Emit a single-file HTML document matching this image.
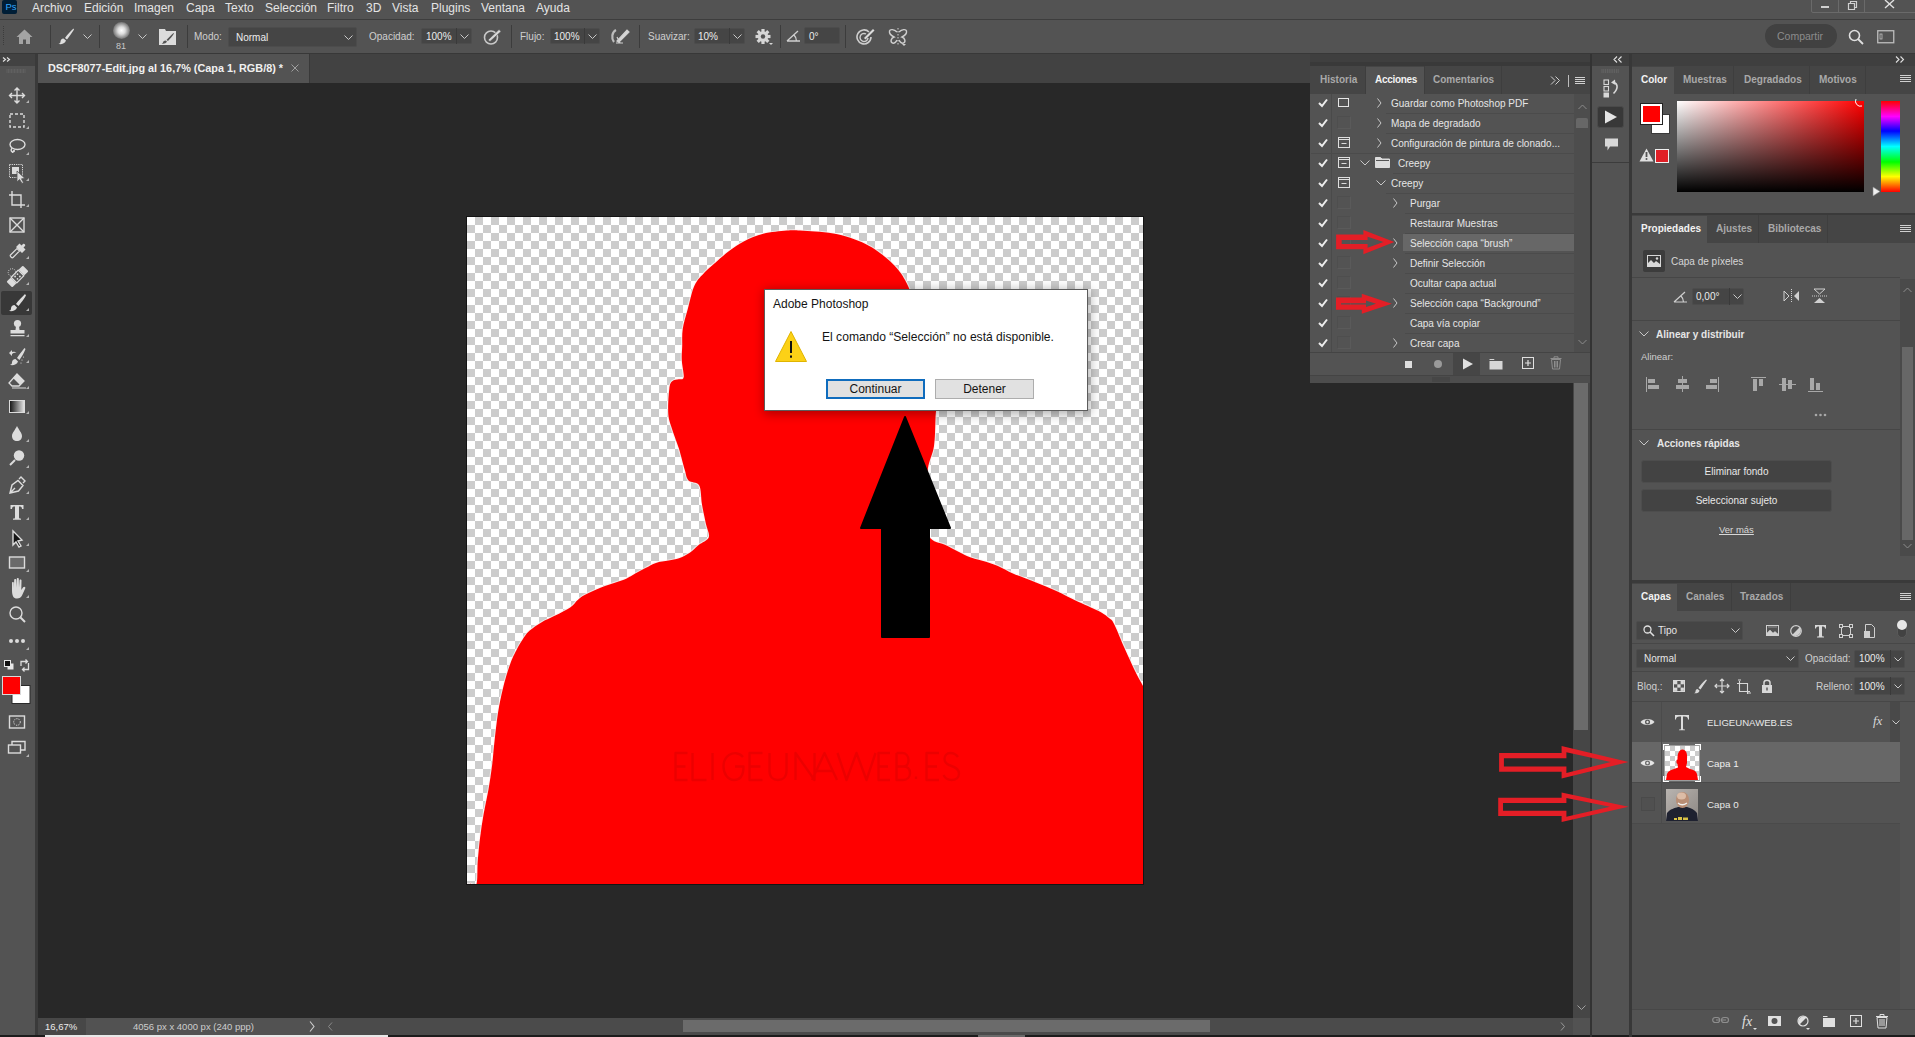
<!DOCTYPE html>
<html><head><meta charset="utf-8">
<style>
*{margin:0;padding:0;box-sizing:border-box}
html,body{width:1915px;height:1037px;overflow:hidden;background:#282828;font-family:"Liberation Sans",sans-serif;color:#d8d8d8;font-size:11px}
.a{position:absolute}
.t{position:absolute;white-space:nowrap;line-height:1}
</style></head><body>
<!-- menu bar -->
<div class="a" style="left:0;top:0;width:1915px;height:19px;background:#535353"></div>
<div class="a" style="left:0;top:19px;width:1915px;height:1px;background:#3d3d3d"></div>
<!-- options bar -->
<div class="a" style="left:0;top:20px;width:1915px;height:33px;background:#535353"></div>
<div class="a" style="left:0;top:53px;width:1915px;height:1px;background:#383838"></div>
<!-- menu content -->
<div class="a" style="left:2px;top:0;width:15px;height:14px;background:#001e36;border-radius:2px"></div>
<div class="t" style="left:5.5px;top:1.5px;font-size:9.5px;color:#31a8ff">Ps</div>
<div id="menu" style="font-size:12px;color:#e4e4e4">
<div class="t" style="left:32px;top:1.5px">Archivo</div>
<div class="t" style="left:84px;top:1.5px">Edición</div>
<div class="t" style="left:134px;top:1.5px">Imagen</div>
<div class="t" style="left:186px;top:1.5px">Capa</div>
<div class="t" style="left:225px;top:1.5px">Texto</div>
<div class="t" style="left:265px;top:1.5px">Selección</div>
<div class="t" style="left:327px;top:1.5px">Filtro</div>
<div class="t" style="left:366px;top:1.5px">3D</div>
<div class="t" style="left:392px;top:1.5px">Vista</div>
<div class="t" style="left:431px;top:1.5px">Plugins</div>
<div class="t" style="left:481px;top:1.5px">Ventana</div>
<div class="t" style="left:536px;top:1.5px">Ayuda</div>
</div>
<!-- window controls -->
<div class="a" style="left:1811px;top:-1px;width:105px;height:14px;border:1px solid #6a6a6a;border-radius:0 0 0 2px"></div>
<div class="a" style="left:1838px;top:0;width:1px;height:13px;background:#6a6a6a"></div>
<div class="a" style="left:1864px;top:0;width:1px;height:13px;background:#6a6a6a"></div>
<div class="a" style="left:1821px;top:6px;width:8px;height:2px;background:#d0d0d0"></div>
<svg class="a" style="left:1846px;top:0" width="12" height="10"><path d="M2.5,3.5h6v6h-6z M4.5,3.5v-2h6v6h-2" fill="none" stroke="#d0d0d0" stroke-width="1.2"/></svg>
<svg class="a" style="left:1884px;top:0" width="12" height="10"><path d="M1,0 L10,8 M10,0 L1,8" stroke="#e0e0e0" stroke-width="1.4"/></svg>
<!-- options bar content -->
<div class="a" style="left:3px;top:26px;width:1px;height:19px;border-left:1px dotted #3c3c3c"></div>
<svg class="a" style="left:16px;top:29px" width="17" height="16"><path d="M8.5,0.5 L0.5,8 L3,8 L3,15 L7,15 L7,10.5 L10,10.5 L10,15 L14,15 L14,8 L16.5,8 Z" fill="#a4a4a4"/></svg>
<div class="a" style="left:50px;top:25px;width:1px;height:23px;background:#3c3c3c"></div>
<svg class="a" style="left:58px;top:28px" width="17" height="17"><path d="M15.5,0.5 C13,3 9,7 7,10 L9,11.5 C11,9 14.5,4 16,1.5 Z M5.5,10.5 C3.5,10.5 2.5,12 2.5,13.5 C2.5,15 1.5,15.5 0.5,16 C3,16.5 7,16 8,12.5 Z" fill="#dedede"/></svg>
<svg class="a" style="left:83px;top:34px" width="9" height="6"><path d="M0.5,0.5 L4.5,4.5 L8.5,0.5" fill="none" stroke="#c8c8c8" stroke-width="1"/></svg>
<div class="a" style="left:99px;top:25px;width:1px;height:23px;background:#3c3c3c"></div>
<div class="a" style="left:113px;top:22px;width:17px;height:17px;border-radius:50%;background:radial-gradient(circle,#fff 0%,#ddd 30%,rgba(150,150,150,.5) 70%,rgba(83,83,83,0) 100%)"></div>
<div class="t" style="left:116px;top:42px;font-size:9px;color:#c8c8c8">81</div>
<svg class="a" style="left:138px;top:34px" width="9" height="6"><path d="M0.5,0.5 L4.5,4.5 L8.5,0.5" fill="none" stroke="#c8c8c8" stroke-width="1"/></svg>
<svg class="a" style="left:158px;top:27px" width="19" height="19"><path d="M1,2 L7,2 L8,4 L18,4 L18,18 L1,18 Z" fill="#dcdcdc"/><path d="M15.5,6 C13,8.5 10,11 8.5,13 L10,14 C12,12 14.5,9 16,6.5 Z M7.5,13.5 C6,13.5 5,14.5 5,15.5 C5,16 4,16.5 3.5,16.5 C5.5,17 8,16.5 9,14.5 Z" fill="#535353"/></svg>
<div class="a" style="left:187px;top:25px;width:1px;height:23px;background:#3c3c3c"></div>
<div style="font-size:10px;color:#cfcfcf">
<div class="t" style="left:194px;top:32px">Modo:</div>
<div class="a" style="left:228px;top:27px;width:129px;height:20px;background:#454545;border:1px solid #4c4c4c;border-radius:2px"></div>
<div class="t" style="left:236px;top:33px;color:#ececec">Normal</div>
<svg class="a" style="left:344px;top:35px" width="9" height="6"><path d="M0.5,0.5 L4.5,4.5 L8.5,0.5" fill="none" stroke="#c8c8c8" stroke-width="1"/></svg>
<div class="t" style="left:369px;top:32px">Opacidad:</div>
<div class="a" style="left:421px;top:28px;width:51px;height:16px;background:#454545;border:1px solid #4c4c4c;border-radius:2px"></div>
<div class="a" style="left:456px;top:28px;width:1px;height:16px;background:#3a3a3a"></div>
<div class="t" style="left:426px;top:32px;color:#ececec">100%</div>
<svg class="a" style="left:460px;top:34px" width="9" height="6"><path d="M0.5,0.5 L4.5,4.5 L8.5,0.5" fill="none" stroke="#c8c8c8" stroke-width="1"/></svg>
<svg class="a" style="left:483px;top:28px" width="19" height="17"><circle cx="8" cy="9.5" r="6.5" fill="none" stroke="#c8c8c8" stroke-width="1.6"/><path d="M5,12 L16,1.5 L18,3.5 L7,13.5 Z" fill="#d8d8d8" stroke="#535353" stroke-width="0.6"/></svg>
<div class="a" style="left:511px;top:25px;width:1px;height:23px;background:#3c3c3c"></div>
<div class="t" style="left:520px;top:32px">Flujo:</div>
<div class="a" style="left:550px;top:28px;width:50px;height:16px;background:#454545;border:1px solid #4c4c4c;border-radius:2px"></div>
<div class="a" style="left:584px;top:28px;width:1px;height:16px;background:#3a3a3a"></div>
<div class="t" style="left:554px;top:32px;color:#ececec">100%</div>
<svg class="a" style="left:588px;top:34px" width="9" height="6"><path d="M0.5,0.5 L4.5,4.5 L8.5,0.5" fill="none" stroke="#c8c8c8" stroke-width="1"/></svg>
<svg class="a" style="left:610px;top:28px" width="20" height="17"><path d="M6,2 C2,4 1,10 4,14" fill="none" stroke="#bdbdbd" stroke-width="2.2"/><path d="M7,13 L17,2 L19,4 L9,14 Z M7,9 L10,15 M6,15 L13,15" fill="#d8d8d8" stroke="#d0d0d0" stroke-width="1.2"/></svg>
<div class="a" style="left:639px;top:25px;width:1px;height:23px;background:#3c3c3c"></div>
<div class="t" style="left:648px;top:32px">Suavizar:</div>
<div class="a" style="left:694px;top:28px;width:51px;height:16px;background:#454545;border:1px solid #4c4c4c;border-radius:2px"></div>
<div class="a" style="left:729px;top:28px;width:1px;height:16px;background:#3a3a3a"></div>
<div class="t" style="left:698px;top:32px;color:#ececec">10%</div>
<svg class="a" style="left:733px;top:34px" width="9" height="6"><path d="M0.5,0.5 L4.5,4.5 L8.5,0.5" fill="none" stroke="#c8c8c8" stroke-width="1"/></svg>
<svg class="a" style="left:755px;top:28px" width="18" height="18"><g transform="translate(8,8.5)"><circle r="5.2" fill="#d6d6d6"/><g fill="#d6d6d6"><rect x="-1.6" y="-7.5" width="3.2" height="15"/><rect x="-1.6" y="-7.5" width="3.2" height="15" transform="rotate(45)"/><rect x="-1.6" y="-7.5" width="3.2" height="15" transform="rotate(90)"/><rect x="-1.6" y="-7.5" width="3.2" height="15" transform="rotate(135)"/></g><circle r="2.2" fill="#535353"/></g><path d="M14,15 L18,15 L16,17 Z" fill="#d6d6d6"/></svg>
<div class="a" style="left:780px;top:25px;width:1px;height:23px;background:#3c3c3c"></div>
<svg class="a" style="left:786px;top:29px" width="15" height="13"><path d="M1,12 L14,12 M1,12 L12,2 M8,6 C10,8 10.5,10 10.5,12" fill="none" stroke="#cfcfcf" stroke-width="1.3"/></svg>
<div class="a" style="left:804px;top:27px;width:36px;height:17px;background:#454545;border:1px solid #4c4c4c;border-radius:2px"></div>
<div class="t" style="left:809px;top:32px;color:#ececec">0°</div>
<div class="a" style="left:845px;top:25px;width:1px;height:23px;background:#3c3c3c"></div>
<svg class="a" style="left:856px;top:28px" width="19" height="17"><path d="M13,4 A7,7 0 1 0 15,9" fill="none" stroke="#cfcfcf" stroke-width="1.6"/><path d="M10,6 A4,4 0 1 0 12,10" fill="none" stroke="#cfcfcf" stroke-width="1.4"/><path d="M8,10 L17,1 L18.5,2.5 L9.5,11.5 Z" fill="#dcdcdc"/></svg>
<svg class="a" style="left:888px;top:28px" width="20" height="19"><path d="M9,4 C6,1 2,1 1.5,3 C1,6 4,8 6,9 C3,10 2,14 4.5,15 C6,16 8,14 9,12 M11,4 C14,1 18,1 18.5,3 C19,6 16,8 14,9 C17,10 18,14 15.5,15 C14,16 12,14 11,12" fill="none" stroke="#cfcfcf" stroke-width="1.4"/><path d="M10,0 L10,18" stroke="#cfcfcf" stroke-width="1" stroke-dasharray="1.5 1.5"/><path d="M14,16 L18,16 L16,18 Z" fill="#cfcfcf"/></svg>
</div>
<div class="a" style="left:1765px;top:24px;width:72px;height:24px;background:#414141;border-radius:12px"></div>
<div class="t" style="left:1777px;top:31px;font-size:10.5px;color:#8c8c8c">Compartir</div>
<svg class="a" style="left:1848px;top:29px" width="16" height="16"><circle cx="6.5" cy="6.5" r="5" fill="none" stroke="#e0e0e0" stroke-width="1.6"/><path d="M10,10 L15,15" stroke="#e0e0e0" stroke-width="1.8"/></svg>
<svg class="a" style="left:1877px;top:30px" width="18" height="14"><rect x="0.75" y="0.75" width="16" height="12" fill="none" stroke="#bdbdbd" stroke-width="1.3"/><rect x="3" y="4" width="2" height="5" fill="none" stroke="#bdbdbd" stroke-width="0.8"/></svg>
<!-- toolbar -->
<div class="a" style="left:0;top:54px;width:35px;height:983px;background:#535353"></div>
<div class="a" style="left:0;top:54px;width:35px;height:12px;background:#424242"></div>
<div class="a" style="left:35px;top:54px;width:3px;height:983px;background:#3a3a3a"></div>
<svg class="a" style="left:0;top:54px" width="35" height="710" viewBox="0 54 35 710">
<path d="M3,57.5 L5.5,59.5 L3,61.5 M7,57.5 L9.5,59.5 L7,61.5" fill="none" stroke="#e0e0e0" stroke-width="1.2"/>
<g stroke="#6a6a6a" stroke-width="0.6"><path d="M7,69v4M8.5,69v4M10,69v4M11.5,69v4M13,69v4M14.5,69v4M16,69v4M17.5,69v4M19,69v4M20.5,69v4M22,69v4M23.5,69v4M25,69v4"/></g>
<rect x="1" y="291" width="31" height="24" rx="2" fill="#383838"/>
<g fill="#b4b4b4">
<path d="M26,103 L29,103 L29,100 Z"/><path d="M26,129 L29,129 L29,126 Z"/><path d="M26,155 L29,155 L29,152 Z"/><path d="M26,181 L29,181 L29,178 Z"/><path d="M26,207 L29,207 L29,204 Z"/><path d="M26,259 L29,259 L29,256 Z"/><path d="M26,285 L29,285 L29,282 Z"/><path d="M26,311 L29,311 L29,308 Z"/><path d="M26,337 L29,337 L29,334 Z"/><path d="M26,363 L29,363 L29,360 Z"/><path d="M26,389 L29,389 L29,386 Z"/><path d="M26,414 L29,414 L29,411 Z"/><path d="M26,442 L29,442 L29,439 Z"/><path d="M26,468 L29,468 L29,465 Z"/><path d="M26,494 L29,494 L29,491 Z"/><path d="M26,520 L29,520 L29,517 Z"/><path d="M26,546 L29,546 L29,543 Z"/><path d="M26,572 L29,572 L29,569 Z"/><path d="M26,598 L29,598 L29,595 Z"/><path d="M26,650 L29,650 L29,647 Z"/><path d="M26,757 L29,757 L29,754 Z"/>
</g>
<g fill="none" stroke="#dcdcdc" stroke-width="1.4">
<!-- move -->
<path d="M17,88 V103 M9.5,95.5 H24.5 M14.5,90.5 L17,88 L19.5,90.5 M14.5,100.5 L17,103 L19.5,100.5 M12,93 L9.5,95.5 L12,98 M22,93 L24.5,95.5 L22,98"/>
<!-- marquee -->
<rect x="10" y="114" width="14" height="13" stroke-dasharray="3 2"/>
<!-- lasso -->
<ellipse cx="17.5" cy="144.5" rx="7.5" ry="5"/><path d="M12,148 C10,151 12,153 14,151.5 C15,150 13,150 12.5,153"/>
<!-- crop -->
<path d="M12,191 V205 H25 M9,195 H21 V208"/>
<!-- frame -->
<rect x="10" y="218" width="14" height="14"/><path d="M10,218 L24,232 M24,218 L10,232"/>
<!-- eyedropper -->
<path d="M10.5,255 L17,248.5 L19.5,251 L13,257.5 C12,258.5 9.5,256 10.5,255 Z" stroke-width="1.2"/>
<!-- healing -->
<circle cx="12" cy="272.5" r="3.8" stroke-dasharray="1 1.2" stroke-width="1"/>
<!-- quick mask -->
<rect x="9.5" y="716" width="15" height="12"/>
<circle cx="17" cy="722" r="3.3" stroke-dasharray="1.3 1.1" stroke-width="1"/>
<!-- screen mode -->
<rect x="8.5" y="745" width="12" height="8"/><path d="M12,745 V741.5 H25 V750 H20.5"/>
<!-- pen -->
<path d="M10,493 L12,485 L18,480.5 L23,485.5 L18.5,491 Z M10,493 L15,488 M19,479 L21,477 L25,481 L23,483"/>
<!-- path select -->
<path d="M13,531 L13,545 L16,542 L19,547 L21,546 L18,541 L22,540 Z" fill="#151515"/>
<!-- rect -->
<rect x="9.5" y="557" width="15" height="11" fill="#6a6a6a"/>
<!-- zoom -->
<circle cx="16" cy="613" r="6"/><path d="M20.5,617.5 L25,622" stroke-width="2"/>
<!-- swap -->
<path d="M21,666 V661.5 H27.5 M25.5,659.5 L27.5,661.5 L25.5,663.5 M28.5,663 V669.5 H22.5 M24.5,667.5 L22.5,669.5 L24.5,671.5" stroke-width="1.3"/>
</g>
<g fill="#dcdcdc">
<!-- object select -->
<rect x="9.5" y="164.5" width="13" height="13" fill="none" stroke="#dcdcdc" stroke-width="1" stroke-dasharray="1.2 1"/><rect x="12" y="167" width="7" height="7"/><path d="M17,171 L17,182 L19.5,179.5 L22,183.5 L23.5,182.5 L21.5,178.8 L25,178.5 Z" stroke="#535353" stroke-width="0.8"/>
<!-- healing dots -->
<circle cx="15" cy="276" r="0.9" fill="#535353"/><circle cx="17.5" cy="278.5" r="0.9" fill="#535353"/><circle cx="17.5" cy="273.5" r="0.9" fill="#535353"/><circle cx="20" cy="276" r="0.9" fill="#535353"/>
<!-- brush -->
<path d="M25,294 C22,297 18,301 16,304 L18.5,306 C21,303 24,299 26,295.5 Z M14.5,305 C12.5,305 11,306.5 11,308.5 C11,310 10,310.5 9,311 C12,311.5 16,311 17,307.5 Z"/>
<!-- stamp -->
<circle cx="17.5" cy="323.5" r="3.6"/><path d="M16,326 h3 l0.5,4 h5 v3.5 h-14 v-3.5 h5 z M10.5,335 h14 v1.3 h-14z"/>
<!-- history brush -->
<path d="M24.5,348 C22,351 19,355 17,358 L19.5,360 C21.5,357 24,353 25.5,349 Z M15.5,359 C13.5,359 12,360.5 12,362.5 C12,364 11,364.5 10,365 C13,365.5 17,365 18,361.5 Z"/><circle cx="22" cy="360" r="0.6"/><circle cx="23.5" cy="357" r="0.6"/><circle cx="21" cy="363" r="0.6"/><path d="M9,353 L12,350 L12,352 C14,351.5 15.5,352 16.5,353 C15,352.5 13.5,352.8 12,354 L12,356 Z"/>
<!-- eraser -->
<path d="M17,374 L24,381 L19,386 L12,386 L9,383 Z" fill="none" stroke="#dcdcdc" stroke-width="1.3"/><path d="M17,374 L24,381 L20,385 L13,378 Z"/><path d="M12,388 H26" stroke="#dcdcdc" stroke-width="1"/>
<!-- drop -->
<path d="M17,426 C15,430 12,433 12,436 C12,439 14,441 17,441 C20,441 22,439 22,436 C22,433 19,430 17,426 Z"/>
<!-- dodge -->
<circle cx="19" cy="455.5" r="5.2"/><path d="M15,460 L10,465" stroke="#dcdcdc" stroke-width="2"/>
<!-- T -->
<path d="M10.5,505 h13 v4 h-1.5 c0,-2 -1,-2.5 -3,-2.5 v11 c0,1 1,1 2,1.2 v1 h-8 v-1 c1,-0.2 2,-0.2 2,-1.2 v-11 c-2,0 -3,0.5 -3,2.5 h-1.5 z"/>
<!-- hand -->
<path d="M12,590 L12,583 C12,581.6 13.8,581.6 13.8,583 L13.8,588 L14.2,580 C14.2,578.6 16.2,578.6 16.2,580 L16.4,587.5 L16.8,579 C16.8,577.6 18.8,577.6 18.8,579 L19,587.5 L19.5,580.5 C19.5,579.1 21.5,579.1 21.5,580.5 L21.3,590 L23,587.5 C24,586 26,587 25.2,588.5 L22,595.5 C21,597.5 19.5,598.5 17,598.5 C13.5,598.5 12,596 12,590 Z"/>
<!-- dots -->
<circle cx="11" cy="641" r="2"/><circle cx="17" cy="641" r="2"/><circle cx="23" cy="641" r="2"/>
<!-- default colors -->
<rect x="7.5" y="663.5" width="6" height="6" fill="#e8e8e8"/><rect x="4.5" y="660.5" width="6" height="6" fill="#111" stroke="#e8e8e8" stroke-width="1"/>
<!-- gradient -->
</g>
<defs><linearGradient id="tg" x1="0" y1="0" x2="1" y2="0"><stop offset="0" stop-color="#111"/><stop offset="1" stop-color="#e8e8e8"/></linearGradient></defs>
<rect x="9.5" y="400.5" width="15" height="12" fill="url(#tg)" stroke="#dcdcdc" stroke-width="1"/>
<g transform="rotate(-45 17.5 276.5)" fill="#dcdcdc"><rect x="6" y="272.5" width="6" height="8" rx="1"/><rect x="23" y="272.5" width="6" height="8" rx="1"/><rect x="12.5" y="272.5" width="10" height="8" fill="none" stroke="#dcdcdc" stroke-width="1.2"/><circle cx="15.8" cy="274.8" r="0.9"/><circle cx="19.2" cy="274.8" r="0.9"/><circle cx="15.8" cy="278.2" r="0.9"/><circle cx="19.2" cy="278.2" r="0.9"/></g>
<path d="M16,247 L19.5,243.5 L21.5,245.5 L23,244 C24,243 26,245 25,246 L23.5,247.5 L25.5,249.5 L22,253 Z" fill="#dcdcdc"/>
<rect x="12" y="685.5" width="18" height="18" fill="#fff" stroke="#2a2a2a" stroke-width="1"/>
<rect x="2.5" y="676.5" width="18" height="18" fill="#ff0000" stroke="#d8d8d8" stroke-width="1"/>
</svg>
<!-- doc tab bar -->
<div class="a" style="left:38px;top:54px;width:1535px;height:29px;background:#424242"></div>
<div class="a" style="left:38px;top:54px;width:271px;height:29px;background:#535353"></div>
<div class="a" style="left:309px;top:54px;width:1px;height:29px;background:#393939"></div>
<!-- canvas area -->
<div class="a" style="left:38px;top:83px;width:1535px;height:935px;background:#282828"></div>
<!-- image canvas -->
<div class="a" style="left:466px;top:216px;width:678px;height:669px;background:#141414"></div>
<div id="img" class="a" style="left:467px;top:217px;width:676px;height:667px;background-color:#ccc;background-image:linear-gradient(45deg,#fff 25%,transparent 25%,transparent 75%,#fff 75%),linear-gradient(45deg,#fff 25%,transparent 25%,transparent 75%,#fff 75%);background-size:16px 16px;background-position:8px 0,0 8px"></div>
<svg class="a" style="left:0;top:0" width="1915" height="1037" viewBox="0 0 1915 1037">
<defs><clipPath id="cc"><rect x="467" y="217" width="676" height="667"/></clipPath></defs>
<g clip-path="url(#cc)">
<path fill="none" stroke="rgba(255,240,240,0.75)" stroke-width="2.2" d="M476.5,884.0 C477.8,880.3 477.1,869.4 477.7,861.7 C478.3,854.0 479.1,845.6 480.1,837.6 C481.1,829.6 482.3,821.5 483.7,813.5 C485.1,805.5 487.1,797.4 488.5,789.4 C489.9,781.4 491.1,773.3 492.1,765.3 C493.1,757.3 493.5,750.0 494.5,741.2 C495.5,732.4 496.7,721.1 498.1,712.3 C499.5,703.5 501.0,696.2 503.0,688.2 C505.0,680.2 507.9,670.4 510.2,664.0 C512.5,657.6 514.2,654.4 516.5,650.0 C518.8,645.6 521.7,640.8 523.9,637.6 C526.1,634.4 526.8,633.1 529.7,630.6 C532.6,628.1 537.0,625.0 541.3,622.5 C545.5,620.0 550.4,618.1 555.2,615.6 C560.0,613.1 566.4,610.2 570.2,607.5 C574.1,604.8 575.4,601.7 578.3,599.4 C581.2,597.1 583.1,595.8 587.6,593.6 C592.1,591.4 599.2,588.3 605.0,586.1 C610.8,583.9 617.9,582.0 622.3,580.3 C626.7,578.6 627.7,577.7 631.6,575.7 C635.5,573.7 641.5,570.2 645.5,568.1 C649.5,566.0 652.0,564.1 655.9,562.9 C659.8,561.6 664.8,561.4 668.6,560.6 C672.5,559.8 675.5,559.5 679.0,558.3 C682.5,557.0 686.1,555.3 689.4,553.1 C692.7,550.9 695.5,547.6 698.7,545.0 C701.9,542.4 707.6,540.8 708.8,537.3 C710.0,533.8 707.0,529.3 705.9,523.8 C704.8,518.3 703.1,510.9 702.0,504.5 C700.9,498.1 701.4,489.2 699.1,485.2 C696.9,481.2 690.9,483.0 688.5,480.4 C686.1,477.8 686.3,475.1 684.7,469.8 C683.1,464.5 681.0,455.3 678.9,448.6 C676.8,441.9 674.0,435.2 672.2,429.4 C670.4,423.6 668.8,420.8 668.3,414.0 C667.8,407.2 668.6,394.4 669.3,388.9 C669.9,383.4 670.6,382.8 672.2,381.2 C673.8,379.6 677.0,379.9 678.9,379.3 C680.8,378.7 683.2,380.5 683.7,377.3 C684.2,374.1 682.0,365.2 681.8,360.0 C681.5,354.8 682.1,351.1 682.2,346.0 C682.4,340.9 681.8,335.2 682.7,329.2 C683.6,323.2 685.5,317.4 687.5,310.1 C689.5,302.9 691.5,292.1 694.4,285.7 C697.3,279.3 701.5,275.9 705.0,272.0 C708.5,268.1 711.5,265.9 715.6,262.4 C719.7,258.9 724.6,254.3 729.4,250.8 C734.2,247.3 738.6,244.0 744.2,241.2 C749.9,238.4 756.2,235.6 763.3,233.8 C770.4,232.0 780.5,231.2 786.6,230.6 C792.7,230.0 795.2,230.3 800.0,230.5 C804.8,230.7 809.9,231.1 815.4,231.6 C820.9,232.1 827.4,232.5 833.2,233.5 C839.0,234.5 844.8,236.0 850.2,237.7 C855.6,239.4 861.1,241.7 865.6,243.9 C870.1,246.1 873.4,248.2 877.2,250.9 C881.1,253.6 884.9,256.5 888.7,260.1 C892.6,263.7 896.8,267.6 900.3,272.5 C903.8,277.4 906.0,281.5 909.6,289.4 C913.2,297.3 918.3,308.2 922.0,320.0 C925.7,331.8 929.7,346.7 932.0,360.0 C934.3,373.3 935.4,390.2 936.0,400.0 C936.6,409.8 935.8,410.8 935.5,418.5 C935.2,426.2 935.2,437.8 934.0,446.0 C932.8,454.2 929.5,459.0 928.0,468.0 C926.5,477.0 924.9,488.7 925.0,500.0 C925.1,511.3 924.7,527.9 928.5,535.6 C932.3,543.3 940.7,542.4 947.6,546.0 C954.5,549.6 963.7,554.7 970.1,557.3 C976.5,559.9 981.2,560.2 985.8,561.7 C990.4,563.2 993.3,564.0 997.9,566.0 C1002.5,568.0 1007.1,571.0 1013.5,573.8 C1019.9,576.5 1028.8,579.6 1036.0,582.5 C1043.2,585.4 1050.2,588.2 1056.9,591.2 C1063.6,594.2 1069.0,597.4 1076.0,600.7 C1083.0,604.0 1093.1,608.2 1098.6,611.1 C1104.1,614.0 1106.4,615.9 1109.0,618.1 C1111.6,620.3 1111.6,619.1 1114.2,624.2 C1116.8,629.3 1121.2,640.7 1124.7,648.5 C1128.2,656.3 1132.0,664.8 1135.0,671.0 C1138.0,677.2 1140.4,681.0 1142.9,685.8 C1145.4,690.6 1148.8,666.0 1150.0,700.0 C1151.2,734.0 1263.3,858.3 1150.0,890.0 C1036.7,921.7 583.3,891.0 470.0,890.0 C356.7,889.0 468.9,885.0 470.0,884.0 C471.1,883.0 475.2,887.7 476.5,884.0 Z"/>
<path fill="#ff0000" d="M476.5,884.0 C477.8,880.3 477.1,869.4 477.7,861.7 C478.3,854.0 479.1,845.6 480.1,837.6 C481.1,829.6 482.3,821.5 483.7,813.5 C485.1,805.5 487.1,797.4 488.5,789.4 C489.9,781.4 491.1,773.3 492.1,765.3 C493.1,757.3 493.5,750.0 494.5,741.2 C495.5,732.4 496.7,721.1 498.1,712.3 C499.5,703.5 501.0,696.2 503.0,688.2 C505.0,680.2 507.9,670.4 510.2,664.0 C512.5,657.6 514.2,654.4 516.5,650.0 C518.8,645.6 521.7,640.8 523.9,637.6 C526.1,634.4 526.8,633.1 529.7,630.6 C532.6,628.1 537.0,625.0 541.3,622.5 C545.5,620.0 550.4,618.1 555.2,615.6 C560.0,613.1 566.4,610.2 570.2,607.5 C574.1,604.8 575.4,601.7 578.3,599.4 C581.2,597.1 583.1,595.8 587.6,593.6 C592.1,591.4 599.2,588.3 605.0,586.1 C610.8,583.9 617.9,582.0 622.3,580.3 C626.7,578.6 627.7,577.7 631.6,575.7 C635.5,573.7 641.5,570.2 645.5,568.1 C649.5,566.0 652.0,564.1 655.9,562.9 C659.8,561.6 664.8,561.4 668.6,560.6 C672.5,559.8 675.5,559.5 679.0,558.3 C682.5,557.0 686.1,555.3 689.4,553.1 C692.7,550.9 695.5,547.6 698.7,545.0 C701.9,542.4 707.6,540.8 708.8,537.3 C710.0,533.8 707.0,529.3 705.9,523.8 C704.8,518.3 703.1,510.9 702.0,504.5 C700.9,498.1 701.4,489.2 699.1,485.2 C696.9,481.2 690.9,483.0 688.5,480.4 C686.1,477.8 686.3,475.1 684.7,469.8 C683.1,464.5 681.0,455.3 678.9,448.6 C676.8,441.9 674.0,435.2 672.2,429.4 C670.4,423.6 668.8,420.8 668.3,414.0 C667.8,407.2 668.6,394.4 669.3,388.9 C669.9,383.4 670.6,382.8 672.2,381.2 C673.8,379.6 677.0,379.9 678.9,379.3 C680.8,378.7 683.2,380.5 683.7,377.3 C684.2,374.1 682.0,365.2 681.8,360.0 C681.5,354.8 682.1,351.1 682.2,346.0 C682.4,340.9 681.8,335.2 682.7,329.2 C683.6,323.2 685.5,317.4 687.5,310.1 C689.5,302.9 691.5,292.1 694.4,285.7 C697.3,279.3 701.5,275.9 705.0,272.0 C708.5,268.1 711.5,265.9 715.6,262.4 C719.7,258.9 724.6,254.3 729.4,250.8 C734.2,247.3 738.6,244.0 744.2,241.2 C749.9,238.4 756.2,235.6 763.3,233.8 C770.4,232.0 780.5,231.2 786.6,230.6 C792.7,230.0 795.2,230.3 800.0,230.5 C804.8,230.7 809.9,231.1 815.4,231.6 C820.9,232.1 827.4,232.5 833.2,233.5 C839.0,234.5 844.8,236.0 850.2,237.7 C855.6,239.4 861.1,241.7 865.6,243.9 C870.1,246.1 873.4,248.2 877.2,250.9 C881.1,253.6 884.9,256.5 888.7,260.1 C892.6,263.7 896.8,267.6 900.3,272.5 C903.8,277.4 906.0,281.5 909.6,289.4 C913.2,297.3 918.3,308.2 922.0,320.0 C925.7,331.8 929.7,346.7 932.0,360.0 C934.3,373.3 935.4,390.2 936.0,400.0 C936.6,409.8 935.8,410.8 935.5,418.5 C935.2,426.2 935.2,437.8 934.0,446.0 C932.8,454.2 929.5,459.0 928.0,468.0 C926.5,477.0 924.9,488.7 925.0,500.0 C925.1,511.3 924.7,527.9 928.5,535.6 C932.3,543.3 940.7,542.4 947.6,546.0 C954.5,549.6 963.7,554.7 970.1,557.3 C976.5,559.9 981.2,560.2 985.8,561.7 C990.4,563.2 993.3,564.0 997.9,566.0 C1002.5,568.0 1007.1,571.0 1013.5,573.8 C1019.9,576.5 1028.8,579.6 1036.0,582.5 C1043.2,585.4 1050.2,588.2 1056.9,591.2 C1063.6,594.2 1069.0,597.4 1076.0,600.7 C1083.0,604.0 1093.1,608.2 1098.6,611.1 C1104.1,614.0 1106.4,615.9 1109.0,618.1 C1111.6,620.3 1111.6,619.1 1114.2,624.2 C1116.8,629.3 1121.2,640.7 1124.7,648.5 C1128.2,656.3 1132.0,664.8 1135.0,671.0 C1138.0,677.2 1140.4,681.0 1142.9,685.8 C1145.4,690.6 1148.8,666.0 1150.0,700.0 C1151.2,734.0 1263.3,858.3 1150.0,890.0 C1036.7,921.7 583.3,891.0 470.0,890.0 C356.7,889.0 468.9,885.0 470.0,884.0 C471.1,883.0 475.2,887.7 476.5,884.0 Z"/>
<path d="M687.5,753 H675.5 V780 H687.5 M675.5,766.5 H685.5 M692.5,753 V780 H706.5 M712.5,753 V780 M743,757 C739,752 733,752.5 729,755 C724,758.5 723.5,763 723.5,766.5 C723.5,774 728,780 734,780 C740,780 743.5,776 743.5,766.5 H735 M762.5,753 H749.5 V780 H762.5 M749.5,766.5 H760.5 M769.5,753 V771 C769.5,777 773,780 778,780 C783,780 786.5,777 786.5,771 V753 M795.5,780 V753 L814.5,780 V753 M812,780 L824.5,753 L837,780 M816.5,771 H832.5 M837.5,753 L846.5,780 L856.5,753 L866.5,780 L875.5,753 M890,753 H878.5 V780 H890 M878.5,766.5 H888 M896.5,753 V780 H903 C907.5,780 910,777 910,773 C910,769 907.5,766.5 903,766.5 H896.5 M903,766.5 C906.5,766.5 908.5,764 908.5,760 C908.5,756 906,753 902,753 H896.5 M916,776.5 v2.5 M939,753 H926.5 V780 H939 M926.5,766.5 H937 M958,757 C955.5,753.5 952.5,753 950.5,753 C946.5,753 944.5,756 944.5,759 C944.5,762.5 947,764.5 951.5,766 C956,767.5 959,770 959,773.5 C959,777.5 956,780 951.5,780 C948,780 945,778 943.5,775" fill="none" stroke="rgba(120,0,0,0.14)" stroke-width="2.4" stroke-linejoin="round"/>
<path fill="#000" stroke="#000" stroke-width="2" stroke-linejoin="round" d="M905,417 L950,528 L929,528 L929,637 L882,637 L882,528 L861,528 Z"/>
</g>
</svg>
<!-- dialog -->
<div class="a" style="left:764px;top:289px;width:324px;height:122px;background:#fff;border:1px solid #5c5c5c;box-shadow:1px 2px 10px 1px rgba(0,0,0,0.32)"></div>
<div class="t" style="left:773px;top:298px;font-size:12px;color:#141414">Adobe Photoshop</div>
<svg class="a" style="left:774px;top:330px" width="34" height="33"><path d="M17,1.5 L32.5,31.5 H1.5 Z" fill="#fcd116" stroke="#e0b400" stroke-width="1" stroke-linejoin="round"/><path d="M17,11 V23" stroke="#111" stroke-width="2"/><rect x="16" y="25.5" width="2" height="2.2" fill="#111"/></svg>
<div class="t" style="left:822px;top:331px;font-size:12.1px;color:#141414">El comando “Selección” no está disponible.</div>
<div class="a" style="left:826px;top:379px;width:99px;height:20px;background:#e1e1e1;border:2px solid #0f6cbd"></div>
<div class="t" style="left:826px;top:383px;width:99px;text-align:center;font-size:12px;color:#141414">Continuar</div>
<div class="a" style="left:935px;top:379px;width:99px;height:20px;background:#e1e1e1;border:1px solid #adadad"></div>
<div class="t" style="left:935px;top:383px;width:99px;text-align:center;font-size:12px;color:#141414">Detener</div>
<!-- status bar -->
<div class="a" style="left:38px;top:1018px;width:1535px;height:17px;background:#4b4b4b"></div>
<div class="a" style="left:38px;top:1018px;width:48px;height:17px;background:#474747"></div>
<div class="a" style="left:86px;top:1018px;width:234px;height:17px;background:#525252"></div>
<div class="t" style="left:45px;top:1022px;font-size:9.5px;color:#ececec">16,67%</div>
<div class="t" style="left:133px;top:1022px;font-size:9.5px;color:#cdcdcd">4056 px x 4000 px (240 ppp)</div>
<svg class="a" style="left:309px;top:1021px" width="6" height="11"><path d="M1,0.5 L5,5.5 L1,10.5" fill="none" stroke="#cfcfcf" stroke-width="1.1"/></svg>
<svg class="a" style="left:327px;top:1022px" width="6" height="9"><path d="M5,0.5 L1.5,4.5 L5,8.5" fill="none" stroke="#8a8a8a" stroke-width="1"/></svg>
<div class="a" style="left:683px;top:1020px;width:527px;height:12px;background:#6b6b6b"></div>
<svg class="a" style="left:1560px;top:1022px" width="6" height="9"><path d="M1,0.5 L4.5,4.5 L1,8.5" fill="none" stroke="#9a9a9a" stroke-width="1"/></svg>
<div class="a" style="left:0;top:1035px;width:1915px;height:2px;background:#1c1c1c"></div>
<div class="a" style="left:45px;top:1035px;width:343px;height:2px;background:#e8e8e8"></div>
<div class="a" style="left:978px;top:1035px;width:47px;height:2px;background:#6a6a6a"></div>
<!-- doc tab text -->
<div class="t" style="left:48px;top:63px;font-size:10.85px;font-weight:bold;color:#f0f0f0">DSCF8077-Edit.jpg al 16,7% (Capa 1, RGB/8) *</div>
<svg class="a" style="left:291px;top:64px" width="8" height="8"><path d="M0.5,0.5 L7.5,7.5 M7.5,0.5 L0.5,7.5" stroke="#a8a8a8" stroke-width="0.9"/></svg>
<!-- vertical scrollbar -->
<div class="a" style="left:1573px;top:82px;width:17px;height:953px;background:#464646"></div>
<div class="a" style="left:1574px;top:83px;width:14px;height:647px;background:#6b6b6b"></div>
<svg class="a" style="left:1577px;top:1005px" width="9" height="6"><path d="M0.5,0.5 L4.5,4.5 L8.5,0.5" fill="none" stroke="#a0a0a0" stroke-width="1"/></svg>
<div class="a" style="left:1573px;top:1018px;width:17px;height:17px;background:#525252"></div>
<div class="a" style="left:1590px;top:54px;width:2px;height:983px;background:#333"></div>
<!-- icon strip -->
<div class="a" style="left:1592px;top:54px;width:37px;height:981px;background:#535353"></div>
<div class="a" style="left:1592px;top:54px;width:37px;height:12px;background:#3f3f3f"></div>
<svg class="a" style="left:1613px;top:56px" width="10" height="7"><path d="M4,0.5 L1,3.5 L4,6.5 M8.5,0.5 L5.5,3.5 L8.5,6.5" fill="none" stroke="#e0e0e0" stroke-width="1.1"/></svg>
<svg class="a" style="left:1601px;top:69px" width="20" height="4"><path d="M1,0v4M2.8,0v4M4.6,0v4M6.4,0v4M8.2,0v4M10,0v4M11.8,0v4M13.6,0v4M15.4,0v4M17.2,0v4" stroke="#6a6a6a" stroke-width="0.7"/></svg>
<svg class="a" style="left:1603px;top:79px" width="16" height="19"><rect x="1" y="1" width="4.5" height="4.5" fill="none" stroke="#d8d8d8" stroke-width="1.1"/><rect x="1" y="7.5" width="4.5" height="4.5" fill="none" stroke="#d8d8d8" stroke-width="1.1"/><rect x="0.5" y="13.5" width="5.5" height="5" fill="#d8d8d8"/><path d="M10.5,3.5 C14.5,4 16,9 10.5,14.5" fill="none" stroke="#d8d8d8" stroke-width="1.6"/><path d="M8,3.5 L12,0.5 L12.5,6 Z" fill="#d8d8d8"/></svg>
<div class="a" style="left:1597px;top:106px;width:27px;height:22px;background:#383838;border-radius:3px;border:1px solid #4a4a4a"></div>
<svg class="a" style="left:1604px;top:110px" width="14" height="14"><path d="M1,0.5 L13,7 L1,13.5 Z" fill="#e4e4e4"/></svg>
<svg class="a" style="left:1604px;top:138px" width="15" height="14"><path d="M1,0.5 H14 V8.5 H6 L3.5,12.5 V8.5 H1 Z" fill="#d8d8d8"/></svg>
<div class="a" style="left:1592px;top:162px;width:37px;height:1px;background:#3c3c3c"></div>
<div class="a" style="left:1629px;top:54px;width:3px;height:983px;background:#383838"></div>
<!-- right panels -->
<div class="a" style="left:1632px;top:54px;width:283px;height:981px;background:#535353"></div>
<div class="a" style="left:1632px;top:54px;width:283px;height:12px;background:#3f3f3f"></div>
<svg class="a" style="left:1895px;top:56px" width="10" height="7"><path d="M1,0.5 L4,3.5 L1,6.5 M5.5,0.5 L8.5,3.5 L5.5,6.5" fill="none" stroke="#e0e0e0" stroke-width="1.1"/></svg>
<!-- color panel -->
<div class="a" style="left:1632px;top:66px;width:283px;height:28px;background:#454545"></div>
<div class="a" style="left:1632px;top:67px;width:42px;height:27px;background:#535353"></div>
<div class="a" style="left:1733px;top:66px;width:1px;height:28px;background:#3e3e3e"></div>
<div class="a" style="left:1809px;top:66px;width:1px;height:28px;background:#3e3e3e"></div>
<div class="a" style="left:1865px;top:66px;width:1px;height:28px;background:#3e3e3e"></div>
<div style="font-size:10px;font-weight:bold;color:#a9a9a9">
<div class="t" style="left:1641px;top:75px;color:#f2f2f2">Color</div>
<div class="t" style="left:1683px;top:75px">Muestras</div>
<div class="t" style="left:1744px;top:75px">Degradados</div>
<div class="t" style="left:1819px;top:75px">Motivos</div>
</div>
<svg class="a" style="left:1900px;top:75px" width="11" height="9"><path d="M0,0.5 H11 M0,2.5 H11 M0,4.5 H11 M0,6.5 H11" stroke="#d0d0d0" stroke-width="1"/></svg>
<div class="a" style="left:1651px;top:114px;width:19px;height:20px;background:#fff;border:1px solid #3a3a3a"></div>
<div class="a" style="left:1641px;top:104px;width:21px;height:20px;background:#ff0000;border:2px solid #fff;outline:1px solid #222"></div>
<svg class="a" style="left:1639px;top:148px" width="15" height="14"><path d="M7.5,0.5 L14.5,13.5 H0.5 Z" fill="#e0e0e0"/><path d="M7.5,4 V9" stroke="#535353" stroke-width="1.8"/><circle cx="7.5" cy="11" r="1" fill="#535353"/></svg>
<div class="a" style="left:1655px;top:149px;width:14px;height:14px;background:#e01f26;border:1px solid #f0f0f0"></div>
<div class="a" style="left:1677px;top:101px;width:187px;height:91px;background:linear-gradient(to bottom,rgba(0,0,0,0),#000),linear-gradient(to right,#fff,#f00)"></div>
<svg class="a" style="left:1855px;top:98px" width="12" height="10"><path d="M1,1 A5,5 0 0 0 7,8" fill="none" stroke="#fff" stroke-width="1"/></svg>
<div class="a" style="left:1881px;top:101px;width:19px;height:91px;background:linear-gradient(to bottom,#f00 0%,#f0f 17%,#00f 33%,#0ff 50%,#0f0 67%,#ff0 83%,#f00 100%)"></div>
<svg class="a" style="left:1872px;top:186px" width="9" height="11"><path d="M1,1 L8,5.5 L1,10 Z" fill="#f0f0f0" stroke="#888" stroke-width="0.6"/></svg>
<div class="a" style="left:1632px;top:213px;width:283px;height:2px;background:#3a3a3a"></div>
<!-- properties panel -->
<div class="a" style="left:1632px;top:215px;width:283px;height:28px;background:#454545"></div>
<div class="a" style="left:1632px;top:216px;width:75px;height:27px;background:#535353"></div>
<div class="a" style="left:1758px;top:215px;width:1px;height:28px;background:#3e3e3e"></div>
<div class="a" style="left:1827px;top:215px;width:1px;height:28px;background:#3e3e3e"></div>
<div style="font-size:10px;font-weight:bold;color:#a9a9a9">
<div class="t" style="left:1641px;top:224px;color:#f2f2f2">Propiedades</div>
<div class="t" style="left:1716px;top:224px">Ajustes</div>
<div class="t" style="left:1768px;top:224px">Bibliotecas</div>
</div>
<svg class="a" style="left:1900px;top:225px" width="11" height="9"><path d="M0,0.5 H11 M0,2.5 H11 M0,4.5 H11 M0,6.5 H11" stroke="#d0d0d0" stroke-width="1"/></svg>
<div class="a" style="left:1643px;top:250px;width:22px;height:22px;background:#3c3c3c;border-radius:2px"></div>
<svg class="a" style="left:1647px;top:255px" width="14" height="12"><rect x="0.5" y="0.5" width="13" height="11" fill="none" stroke="#d8d8d8"/><path d="M1,11 L1,8 L4,5 L7,8 L9,6 L13,9 L13,11 Z" fill="#d8d8d8"/><circle cx="10" cy="3.5" r="1.2" fill="#d8d8d8"/></svg>
<div class="t" style="left:1671px;top:257px;font-size:10px;color:#d6d6d6">Capa de píxeles</div>
<div class="a" style="left:1632px;top:277px;width:268px;height:1px;background:#464646"></div>
<div class="a" style="left:1900px;top:279px;width:15px;height:277px;background:#4a4a4a"></div>
<div class="a" style="left:1902px;top:347px;width:11px;height:193px;background:#676767"></div>
<svg class="a" style="left:1903px;top:287px" width="9" height="6"><path d="M0.5,5 L4.5,1 L8.5,5" fill="none" stroke="#8c8c8c" stroke-width="1"/></svg>
<svg class="a" style="left:1903px;top:543px" width="9" height="6"><path d="M0.5,1 L4.5,5 L8.5,1" fill="none" stroke="#8c8c8c" stroke-width="1"/></svg>
<svg class="a" style="left:1673px;top:290px" width="15" height="13"><path d="M1,12 H14 M1,12 L12,2 M8,6 C10,8 10.5,10 10.5,12" fill="none" stroke="#cfcfcf" stroke-width="1.2"/></svg>
<div class="a" style="left:1692px;top:288px;width:52px;height:17px;background:#454545;border:1px solid #4c4c4c;border-radius:2px"></div>
<div class="a" style="left:1729px;top:288px;width:1px;height:17px;background:#3a3a3a"></div>
<div class="t" style="left:1696px;top:292px;font-size:10px;color:#ececec">0,00°</div>
<svg class="a" style="left:1733px;top:294px" width="9" height="6"><path d="M0.5,0.5 L4.5,4.5 L8.5,0.5" fill="none" stroke="#c8c8c8" stroke-width="1"/></svg>
<svg class="a" style="left:1783px;top:289px" width="17" height="14"><path d="M1,2 L6,7 L1,12 Z" fill="none" stroke="#d0d0d0"/><path d="M16,2 L11,7 L16,12 Z" fill="#d0d0d0"/><path d="M8.5,0 V14" stroke="#d0d0d0" stroke-dasharray="1 1"/></svg>
<svg class="a" style="left:1812px;top:288px" width="15" height="16"><path d="M2,1 H13 L7.5,6 Z" fill="none" stroke="#d0d0d0"/><path d="M2,15 H13 L7.5,10 Z" fill="#d0d0d0"/><path d="M0,8 H15" stroke="#d0d0d0" stroke-dasharray="1 1"/></svg>
<div class="a" style="left:1632px;top:320px;width:268px;height:1px;background:#464646"></div>
<svg class="a" style="left:1639px;top:331px" width="10" height="6"><path d="M0.5,0.5 L5,5 L9.5,0.5" fill="none" stroke="#c8c8c8" stroke-width="1"/></svg>
<div class="t" style="left:1656px;top:330px;font-size:10px;font-weight:bold;color:#e6e6e6">Alinear y distribuir</div>
<div class="t" style="left:1641px;top:352px;font-size:9.5px;color:#cfcfcf">Alinear:</div>
<svg class="a" style="left:1645px;top:375px" width="190" height="46">
<g fill="#a8a8a8">
<rect x="1" y="2" width="1" height="15"/><rect x="3" y="4" width="7" height="4"/><rect x="3" y="10" width="11" height="4"/>
<rect x="37" y="1" width="1" height="16"/><rect x="33" y="4" width="9" height="4"/><rect x="31" y="10" width="13" height="4"/>
<rect x="73" y="2" width="1" height="15"/><rect x="65" y="4" width="7" height="4"/><rect x="61" y="10" width="11" height="4"/>
<rect x="106" y="2" width="15" height="1"/><rect x="108" y="4" width="4" height="12"/><rect x="114" y="4" width="4" height="7"/>
<rect x="134" y="9" width="17" height="1"/><rect x="137" y="3" width="4" height="13"/><rect x="143" y="5" width="4" height="9"/>
<rect x="163" y="16" width="15" height="1"/><rect x="165" y="3" width="4" height="12"/><rect x="171" y="8" width="4" height="7"/>
<circle cx="171" cy="40" r="1.3"/><circle cx="175.5" cy="40" r="1.3"/><circle cx="180" cy="40" r="1.3"/>
</g></svg>
<div class="a" style="left:1632px;top:429px;width:268px;height:1px;background:#464646"></div>
<svg class="a" style="left:1639px;top:440px" width="10" height="6"><path d="M0.5,0.5 L5,5 L9.5,0.5" fill="none" stroke="#c8c8c8" stroke-width="1"/></svg>
<div class="t" style="left:1657px;top:439px;font-size:10px;font-weight:bold;color:#e6e6e6">Acciones rápidas</div>
<div class="a" style="left:1641px;top:460px;width:191px;height:23px;background:#434343;border:1px solid #4d4d4d;border-radius:3px"></div>
<div class="t" style="left:1641px;top:467px;width:191px;text-align:center;font-size:10px;color:#e8e8e8">Eliminar fondo</div>
<div class="a" style="left:1641px;top:489px;width:191px;height:23px;background:#434343;border:1px solid #4d4d4d;border-radius:3px"></div>
<div class="t" style="left:1641px;top:496px;width:191px;text-align:center;font-size:10px;color:#e8e8e8">Seleccionar sujeto</div>
<div class="t" style="left:1719px;top:525px;font-size:9.5px;color:#d8d8d8;text-decoration:underline">Ver más</div>
<div class="a" style="left:1632px;top:580px;width:283px;height:3px;background:#3a3a3a"></div>
<!-- layers panel -->
<div class="a" style="left:1632px;top:583px;width:283px;height:28px;background:#454545"></div>
<div class="a" style="left:1632px;top:584px;width:45px;height:27px;background:#535353"></div>
<div class="a" style="left:1731px;top:583px;width:1px;height:28px;background:#3e3e3e"></div>
<div class="a" style="left:1790px;top:583px;width:1px;height:28px;background:#3e3e3e"></div>
<div style="font-size:10px;font-weight:bold;color:#a9a9a9">
<div class="t" style="left:1641px;top:592px;color:#f2f2f2">Capas</div>
<div class="t" style="left:1686px;top:592px">Canales</div>
<div class="t" style="left:1740px;top:592px">Trazados</div>
</div>
<svg class="a" style="left:1900px;top:593px" width="11" height="9"><path d="M0,0.5 H11 M0,2.5 H11 M0,4.5 H11 M0,6.5 H11" stroke="#d0d0d0" stroke-width="1"/></svg>
<div class="a" style="left:1636px;top:621px;width:107px;height:19px;background:#454545;border:1px solid #4c4c4c;border-radius:2px"></div>
<svg class="a" style="left:1643px;top:625px" width="12" height="12"><circle cx="4.5" cy="4.5" r="3.5" fill="none" stroke="#e0e0e0" stroke-width="1.3"/><path d="M7,7 L11,11" stroke="#e0e0e0" stroke-width="1.6"/></svg>
<div class="t" style="left:1658px;top:626px;font-size:10px;color:#e6e6e6">Tipo</div>
<svg class="a" style="left:1731px;top:628px" width="9" height="6"><path d="M0.5,0.5 L4.5,4.5 L8.5,0.5" fill="none" stroke="#c8c8c8" stroke-width="1"/></svg>
<svg class="a" style="left:1764px;top:623px" width="120" height="16">
<rect x="2.5" y="2.5" width="12" height="10" fill="none" stroke="#d0d0d0" stroke-width="1"/><path d="M3,12 L3,10 L6,7 L9,10 L11,8.5 L14,11 L14,12 Z M4,4 H13" fill="#d0d0d0" stroke="#d0d0d0" stroke-width="0.5"/>
<circle cx="32" cy="8" r="5.3" fill="none" stroke="#d0d0d0" stroke-width="1.2"/><path d="M28.3,11.7 A5.3,5.3 0 0 0 35.7,4.3 Z" fill="#d0d0d0"/>
<path d="M51,2 H62 V5.5 H61 C61,4 60,3.5 58,3.5 V12.5 C58,13.5 59,13.5 60,13.5 V14.5 H53 V13.5 C54,13.5 55,13.5 55,12.5 V3.5 C53,3.5 52,4 52,5.5 H51 Z" fill="#d8d8d8"/>
<rect x="77.5" y="3.5" width="9" height="9" fill="none" stroke="#d0d0d0"/><rect x="75.5" y="1.5" width="3" height="3" fill="#535353" stroke="#d0d0d0"/><rect x="85.5" y="1.5" width="3" height="3" fill="#535353" stroke="#d0d0d0"/><rect x="75.5" y="11.5" width="3" height="3" fill="#535353" stroke="#d0d0d0"/><rect x="85.5" y="11.5" width="3" height="3" fill="#535353" stroke="#d0d0d0"/>
<path d="M101.5,1.5 H107.5 L110.5,4.5 V14.5 H101.5 Z" fill="none" stroke="#d0d0d0"/><rect x="100" y="8" width="6" height="7" fill="#d0d0d0"/>
</svg>
<div class="a" style="left:1897px;top:620px;width:10px;height:18px;border-radius:5px;background:#424242;border:1px solid #5a5a5a"></div>
<div class="a" style="left:1897px;top:620px;width:10px;height:10px;border-radius:50%;background:#e8e8e8"></div>
<div class="a" style="left:1632px;top:643px;width:283px;height:1px;background:#474747"></div>
<div class="a" style="left:1636px;top:649px;width:163px;height:19px;background:#454545;border:1px solid #4c4c4c;border-radius:2px"></div>
<div class="t" style="left:1644px;top:654px;font-size:10px;color:#e6e6e6">Normal</div>
<svg class="a" style="left:1786px;top:656px" width="9" height="6"><path d="M0.5,0.5 L4.5,4.5 L8.5,0.5" fill="none" stroke="#c8c8c8" stroke-width="1"/></svg>
<div class="t" style="left:1805px;top:654px;font-size:10px;color:#cfcfcf">Opacidad:</div>
<div class="a" style="left:1854px;top:650px;width:51px;height:18px;background:#454545;border:1px solid #4c4c4c;border-radius:2px"></div>
<div class="a" style="left:1890px;top:650px;width:1px;height:18px;background:#3a3a3a"></div>
<div class="t" style="left:1859px;top:654px;font-size:10px;color:#ececec">100%</div>
<svg class="a" style="left:1894px;top:657px" width="8" height="5"><path d="M0.5,0.5 L4,4 L7.5,0.5" fill="none" stroke="#c8c8c8" stroke-width="1"/></svg>
<div class="a" style="left:1632px;top:671px;width:283px;height:1px;background:#474747"></div>
<div class="t" style="left:1637px;top:682px;font-size:10px;color:#cfcfcf">Bloq.:</div>
<svg class="a" style="left:1672px;top:678px" width="105" height="17">
<rect x="1.5" y="2.5" width="11" height="11" fill="none" stroke="#d8d8d8"/><rect x="2" y="3" width="3.3" height="3.3" fill="#d8d8d8"/><rect x="8.6" y="3" width="3.3" height="3.3" fill="#d8d8d8"/><rect x="5.3" y="6.3" width="3.3" height="3.3" fill="#d8d8d8"/><rect x="2" y="9.6" width="3.3" height="3.3" fill="#d8d8d8"/><rect x="8.6" y="9.6" width="3.3" height="3.3" fill="#d8d8d8"/>
<path d="M34,1.5 C31,4 28,7.5 26.5,10 L28.5,11.5 C30,9 33,5 35,2 Z M25.5,11 C24,11 23.5,12.5 23.5,13.5 C23.5,14.5 22.5,15 22,15.3 C24.5,15.5 27.5,15 27.5,12.5 Z" fill="#d8d8d8"/>
<path d="M50,1 V15 M43,8 H57 M48,3 L50,1 L52,3 M48,13 L50,15 L52,13 M45,6 L43,8 L45,10 M55,6 L57,8 L55,10" fill="none" stroke="#d8d8d8" stroke-width="1.2"/>
<path d="M67.5,3 V13.5 H78 M65,5.5 H75.5 V16" fill="none" stroke="#d8d8d8" stroke-width="1.1"/><path d="M66,2 L69,2 M76,15 L79,15" stroke="#d8d8d8"/>
<path d="M92,7 V4.5 C92,1.5 98,1.5 98,4.5 V7" fill="none" stroke="#d8d8d8" stroke-width="1.5"/><rect x="90" y="7" width="10" height="8" fill="#d8d8d8"/><rect x="94.3" y="9.5" width="1.4" height="3" fill="#535353"/>
</svg>
<div class="t" style="left:1816px;top:682px;font-size:10px;color:#cfcfcf">Relleno:</div>
<div class="a" style="left:1854px;top:677px;width:51px;height:18px;background:#454545;border:1px solid #4c4c4c;border-radius:2px"></div>
<div class="a" style="left:1890px;top:677px;width:1px;height:18px;background:#3a3a3a"></div>
<div class="t" style="left:1859px;top:682px;font-size:10px;color:#ececec">100%</div>
<svg class="a" style="left:1894px;top:684px" width="8" height="5"><path d="M0.5,0.5 L4,4 L7.5,0.5" fill="none" stroke="#c8c8c8" stroke-width="1"/></svg>
<div class="a" style="left:1632px;top:701px;width:283px;height:1px;background:#474747"></div>
<!-- layer rows -->
<div class="a" style="left:1632px;top:824px;width:268px;height:185px;background:#4f4f4f"></div>
<div class="a" style="left:1900px;top:742px;width:15px;height:267px;background:#535353"></div>
<div class="a" style="left:1890px;top:702px;width:10px;height:40px;background:#494949"></div>
<div class="a" style="left:1632px;top:742px;width:268px;height:40px;background:#676767"></div>
<div class="a" style="left:1632px;top:782px;width:268px;height:1px;background:#4a4a4a"></div>
<div class="a" style="left:1632px;top:823px;width:268px;height:1px;background:#4a4a4a"></div>
<div class="a" style="left:1661px;top:702px;width:1px;height:121px;background:#4b4b4b"></div>
<svg class="a" style="left:1640px;top:717px" width="15" height="10"><path d="M0.5,5 C3,1 12,1 14.5,5 C12,9 3,9 0.5,5 Z" fill="#e0e0e0"/><circle cx="7.5" cy="5" r="2.5" fill="#535353"/><circle cx="7.5" cy="5" r="1.2" fill="#e0e0e0"/></svg>
<svg class="a" style="left:1640px;top:758px" width="15" height="10"><path d="M0.5,5 C3,1 12,1 14.5,5 C12,9 3,9 0.5,5 Z" fill="#e6e6e6"/><circle cx="7.5" cy="5" r="2.5" fill="#676767"/><circle cx="7.5" cy="5" r="1.2" fill="#e6e6e6"/></svg>
<div class="a" style="left:1641px;top:797px;width:14px;height:14px;border:1px solid #4a4a4a;background:#505050"></div>
<svg class="a" style="left:1674px;top:714px" width="16" height="17"><path d="M1,1 H15 V5.5 H14 C14,3.5 13,2.5 10.5,2.5 H9 V14.5 C9,15.5 10,15.5 11,15.5 V16.3 H5 V15.5 C6,15.5 7,15.5 7,14.5 V2.5 H5.5 C3,2.5 2,3.5 2,5.5 H1 Z" fill="#dcdcdc"/></svg>
<div class="t" style="left:1707px;top:718px;font-size:9.6px;color:#e8e8e8">ELIGEUNAWEB.ES</div>
<div class="t" style="left:1873px;top:714px;font-size:13px;font-style:italic;color:#d8d8d8;font-family:'Liberation Serif',serif">fx</div>
<svg class="a" style="left:1892px;top:720px" width="8" height="5"><path d="M0.5,0.5 L4,4 L7.5,0.5" fill="none" stroke="#c8c8c8" stroke-width="1"/></svg>
<div class="t" style="left:1707px;top:759px;font-size:9.8px;color:#f0f0f0">Capa 1</div>
<div class="t" style="left:1707px;top:800px;font-size:9.8px;color:#e8e8e8">Capa 0</div>
<div class="a" style="left:1665px;top:746px;width:34px;height:34px;background-color:#ccc;background-image:linear-gradient(45deg,#fff 25%,transparent 25%,transparent 75%,#fff 75%),linear-gradient(45deg,#fff 25%,transparent 25%,transparent 75%,#fff 75%);background-size:10px 10px;background-position:5px 0,0 5px"></div>
<svg class="a" style="left:1665px;top:746px" width="34" height="34"><path d="M1,34 L2,28 C3,25 6,24 9,23 L13,21.5 L12.5,18 L11.5,17 L11.5,14 L12.5,13.5 C12.5,8 13.5,4 17.5,3.5 C21.5,4 22.5,8 22,13 L22,17 L21,21 L25,23 C29,24 31,25 32,28 L33,34 Z" fill="#ff0000"/></svg>
<svg class="a" style="left:1663px;top:744px" width="38" height="38"><path d="M0.5,6 V0.5 H6 M32,0.5 H37.5 V6 M37.5,32 V37.5 H32 M6,37.5 H0.5 V32" fill="none" stroke="#fff" stroke-width="1.2"/><rect x="1.5" y="1.5" width="35" height="35" fill="none" stroke="#fff" stroke-opacity=".35" stroke-width="1"/></svg>
<div class="a" style="left:1666px;top:789px;width:32px;height:32px;background:linear-gradient(135deg,#b9b4b0 0%,#a29d99 50%,#8c8783 100%)"></div>
<svg class="a" style="left:1666px;top:789px" width="32" height="32"><path d="M0,32 L1,24 C4,20 9,19 12,18 L21,18 C25,19 29,21 31,24 L32,32 Z" fill="#1e2130"/><ellipse cx="16.5" cy="11" rx="6.5" ry="8" fill="#b88d74"/><ellipse cx="15.5" cy="7" rx="4.5" ry="3.5" fill="#dcbca6"/><path d="M12,14 Q16,17.5 21,14" stroke="#f2f2f2" stroke-width="1.3" fill="none"/><path d="M8,29 h3 v2 h-3z M12,28 h4 v3 h-4z M17,28.5 h5 v2.5 h-5z" fill="#d9c247"/></svg>
<!-- layers footer -->
<div class="a" style="left:1632px;top:1009px;width:283px;height:1px;background:#474747"></div>
<svg class="a" style="left:1712px;top:1013px" width="180" height="18">
<path d="M4,7 H8 M10,7 H14" stroke="#8e8e8e"/><rect x="0.7" y="4.5" width="7" height="5" rx="2.5" fill="none" stroke="#8e8e8e" stroke-width="1.2"/><rect x="9.5" y="4.5" width="7" height="5" rx="2.5" fill="none" stroke="#8e8e8e" stroke-width="1.2"/>
<text x="30" y="13" font-family="Liberation Serif" font-style="italic" font-size="14" fill="#e0e0e0">fx</text><path d="M41,15 H45 L43,17 Z" fill="#e0e0e0"/>
<rect x="56" y="3" width="13" height="10" fill="#e0e0e0"/><circle cx="62.5" cy="8" r="3" fill="#535353"/>
<circle cx="91" cy="8" r="5" fill="none" stroke="#e0e0e0" stroke-width="1.2"/><path d="M87.5,11.5 A5,5 0 0 1 94.5,4.5 Z" fill="#e0e0e0"/><path d="M94,15 H98 L96,17 Z" fill="#e0e0e0"/>
<path d="M111,4 V3 H115 L116,4 Z" fill="#e0e0e0"/><rect x="111" y="5" width="12" height="9" fill="#e0e0e0"/>
<rect x="138.5" y="2.5" width="11" height="11" fill="none" stroke="#e0e0e0"/><path d="M144,5 V11 M141,8 H147" stroke="#e0e0e0" stroke-width="1.2"/>
<path d="M164,3.5 H176 M168,3.5 V1.5 H172 V3.5 M165,4.5 L166,15 H174 L175,4.5 Z M168,6 V13 M170,6 V13 M172,6 V13" fill="none" stroke="#e0e0e0"/>
</svg>

<!-- actions panel -->
<div class="a" style="left:1310px;top:54px;width:280px;height:12px;background:#3f3f3f"></div>
<div class="a" style="left:1310px;top:62px;width:280px;height:4px;background:#393939"></div>
<div class="a" style="left:1310px;top:66px;width:280px;height:317px;background:#535353"></div>
<div class="a" style="left:1310px;top:66px;width:280px;height:28px;background:#454545"></div>
<div class="a" style="left:1366px;top:67px;width:58px;height:28px;background:#535353"></div>
<div class="a" style="left:1365px;top:66px;width:1px;height:28px;background:#3e3e3e"></div>
<div class="a" style="left:1424px;top:66px;width:1px;height:28px;background:#3e3e3e"></div>
<div class="a" style="left:1501px;top:66px;width:1px;height:28px;background:#3e3e3e"></div>
<div class="t" style="left:1320px;top:75px;font-size:10px;font-weight:bold;color:#a9a9a9">Historia</div>
<div class="t" style="left:1375px;top:75px;font-size:10px;font-weight:bold;color:#f2f2f2;letter-spacing:-0.3px">Acciones</div>
<div class="t" style="left:1433px;top:75px;font-size:10px;font-weight:bold;color:#a9a9a9">Comentarios</div>
<svg class="a" style="left:1550px;top:75px" width="40" height="13"><path d="M1,1.5 L5,5.5 L1,9.5 M5.5,1.5 L9.5,5.5 L5.5,9.5" fill="none" stroke="#d0d0d0" stroke-width="1"/><path d="M18.5,0 V12" stroke="#bdbdbd" stroke-width="1"/><path d="M25,2.5 H35 M25,4.5 H35 M25,6.5 H35 M25,8.5 H35" stroke="#d0d0d0" stroke-width="1"/></svg>
<div class="a" style="left:1331px;top:94px;width:1px;height:258px;background:#4a4a4a"></div>
<div class="a" style="left:1574px;top:94px;width:16px;height:258px;background:#4d4d4d"></div>
<svg class="a" style="left:1578px;top:104px" width="9" height="6"><path d="M0.5,5 L4.5,1 L8.5,5" fill="none" stroke="#8c8c8c" stroke-width="1"/></svg>
<div class="a" style="left:1576px;top:118px;width:12px;height:10px;background:#676767;border-radius:2px 2px 0 0"></div>
<svg class="a" style="left:1578px;top:339px" width="9" height="6"><path d="M0.5,1 L4.5,5 L8.5,1" fill="none" stroke="#8c8c8c" stroke-width="1"/></svg>
<div class="a" style="left:1386px;top:113px;width:188px;height:1px;background:#4b4b4b"></div>
<svg class="a" style="left:1318px;top:98px" width="10" height="10"><path d="M1,5 L4,8 L9,1.5" fill="none" stroke="#ececec" stroke-width="2"/></svg>
<div class="a" style="left:1338px;top:98px;width:11px;height:9px;border:1px solid #e6e6e6"></div>
<svg class="a" style="left:1377px;top:98px" width="5" height="10"><path d="M0.5,0.5 L4,5 L0.5,9.5" fill="none" stroke="#c8c8c8" stroke-width="1"/></svg>
<div class="t" style="left:1391px;top:99px;font-size:10px;color:#e6e6e6">Guardar como Photoshop PDF</div>
<div class="a" style="left:1386px;top:133px;width:188px;height:1px;background:#4b4b4b"></div>
<svg class="a" style="left:1318px;top:118px" width="10" height="10"><path d="M1,5 L4,8 L9,1.5" fill="none" stroke="#ececec" stroke-width="2"/></svg>
<div class="a" style="left:1337px;top:116px;width:14px;height:13px;border:1px solid #5a5a5a;border-top-color:#4e4e4e;border-left-color:#4e4e4e"></div>
<svg class="a" style="left:1377px;top:118px" width="5" height="10"><path d="M0.5,0.5 L4,5 L0.5,9.5" fill="none" stroke="#c8c8c8" stroke-width="1"/></svg>
<div class="t" style="left:1391px;top:119px;font-size:10px;color:#e6e6e6">Mapa de degradado</div>
<div class="a" style="left:1311px;top:153px;width:263px;height:1px;background:#4b4b4b"></div>
<svg class="a" style="left:1318px;top:138px" width="10" height="10"><path d="M1,5 L4,8 L9,1.5" fill="none" stroke="#ececec" stroke-width="2"/></svg>
<svg class="a" style="left:1338px;top:137px" width="12" height="11"><rect x="0.5" y="0.5" width="11" height="10" fill="none" stroke="#dedede"/><path d="M0.5,2.5 H11.5 M3.5,6.5 H8.5" stroke="#dedede"/></svg>
<svg class="a" style="left:1377px;top:138px" width="5" height="10"><path d="M0.5,0.5 L4,5 L0.5,9.5" fill="none" stroke="#c8c8c8" stroke-width="1"/></svg>
<div class="t" style="left:1391px;top:139px;font-size:10px;color:#e6e6e6">Configuración de pintura de clonado...</div>
<div class="a" style="left:1393px;top:173px;width:181px;height:1px;background:#4b4b4b"></div>
<svg class="a" style="left:1318px;top:158px" width="10" height="10"><path d="M1,5 L4,8 L9,1.5" fill="none" stroke="#ececec" stroke-width="2"/></svg>
<svg class="a" style="left:1338px;top:157px" width="12" height="11"><rect x="0.5" y="0.5" width="11" height="10" fill="none" stroke="#dedede"/><path d="M0.5,2.5 H11.5 M3.5,6.5 H8.5" stroke="#dedede"/></svg>
<svg class="a" style="left:1360px;top:160px" width="10" height="6"><path d="M0.5,0.5 L5,5 L9.5,0.5" fill="none" stroke="#c8c8c8" stroke-width="1"/></svg>
<svg class="a" style="left:1375px;top:156px" width="15" height="12"><path d="M0.5,1.5 H5.5 L7,3 H14.5 V11.5 H0.5 Z" fill="#dcdcdc" stroke="#dcdcdc" stroke-width="1"/><path d="M1,4.5 H14" stroke="#535353" stroke-width="1"/></svg>
<div class="t" style="left:1398px;top:159px;font-size:10px;color:#e6e6e6">Creepy</div>
<div class="a" style="left:1386px;top:193px;width:188px;height:1px;background:#4b4b4b"></div>
<svg class="a" style="left:1318px;top:178px" width="10" height="10"><path d="M1,5 L4,8 L9,1.5" fill="none" stroke="#ececec" stroke-width="2"/></svg>
<svg class="a" style="left:1338px;top:177px" width="12" height="11"><rect x="0.5" y="0.5" width="11" height="10" fill="none" stroke="#dedede"/><path d="M0.5,2.5 H11.5 M3.5,6.5 H8.5" stroke="#dedede"/></svg>
<svg class="a" style="left:1376px;top:180px" width="10" height="6"><path d="M0.5,0.5 L5,5 L9.5,0.5" fill="none" stroke="#c8c8c8" stroke-width="1"/></svg>
<div class="t" style="left:1391px;top:179px;font-size:10px;color:#e6e6e6">Creepy</div>
<div class="a" style="left:1405px;top:213px;width:169px;height:1px;background:#4b4b4b"></div>
<svg class="a" style="left:1318px;top:198px" width="10" height="10"><path d="M1,5 L4,8 L9,1.5" fill="none" stroke="#ececec" stroke-width="2"/></svg>
<div class="a" style="left:1337px;top:196px;width:14px;height:13px;border:1px solid #5a5a5a;border-top-color:#4e4e4e;border-left-color:#4e4e4e"></div>
<svg class="a" style="left:1393px;top:198px" width="5" height="10"><path d="M0.5,0.5 L4,5 L0.5,9.5" fill="none" stroke="#c8c8c8" stroke-width="1"/></svg>
<div class="t" style="left:1410px;top:199px;font-size:10px;color:#e6e6e6">Purgar</div>
<div class="a" style="left:1405px;top:233px;width:169px;height:1px;background:#4b4b4b"></div>
<svg class="a" style="left:1318px;top:218px" width="10" height="10"><path d="M1,5 L4,8 L9,1.5" fill="none" stroke="#ececec" stroke-width="2"/></svg>
<div class="a" style="left:1337px;top:216px;width:14px;height:13px;border:1px solid #5a5a5a;border-top-color:#4e4e4e;border-left-color:#4e4e4e"></div>
<div class="t" style="left:1410px;top:219px;font-size:10px;color:#e6e6e6">Restaurar Muestras</div>
<div class="a" style="left:1405px;top:253px;width:169px;height:1px;background:#4b4b4b"></div>
<div class="a" style="left:1403px;top:234px;width:171px;height:17px;background:#676767"></div>
<svg class="a" style="left:1318px;top:238px" width="10" height="10"><path d="M1,5 L4,8 L9,1.5" fill="none" stroke="#ececec" stroke-width="2"/></svg>
<div class="a" style="left:1337px;top:236px;width:14px;height:13px;border:1px solid #5a5a5a;border-top-color:#4e4e4e;border-left-color:#4e4e4e"></div>
<svg class="a" style="left:1393px;top:238px" width="5" height="10"><path d="M0.5,0.5 L4,5 L0.5,9.5" fill="none" stroke="#c8c8c8" stroke-width="1"/></svg>
<div class="t" style="left:1410px;top:239px;font-size:10px;color:#e6e6e6">Selección capa “brush”</div>
<div class="a" style="left:1405px;top:273px;width:169px;height:1px;background:#4b4b4b"></div>
<svg class="a" style="left:1318px;top:258px" width="10" height="10"><path d="M1,5 L4,8 L9,1.5" fill="none" stroke="#ececec" stroke-width="2"/></svg>
<div class="a" style="left:1337px;top:256px;width:14px;height:13px;border:1px solid #5a5a5a;border-top-color:#4e4e4e;border-left-color:#4e4e4e"></div>
<svg class="a" style="left:1393px;top:258px" width="5" height="10"><path d="M0.5,0.5 L4,5 L0.5,9.5" fill="none" stroke="#c8c8c8" stroke-width="1"/></svg>
<div class="t" style="left:1410px;top:259px;font-size:10px;color:#e6e6e6">Definir Selección</div>
<div class="a" style="left:1405px;top:293px;width:169px;height:1px;background:#4b4b4b"></div>
<svg class="a" style="left:1318px;top:278px" width="10" height="10"><path d="M1,5 L4,8 L9,1.5" fill="none" stroke="#ececec" stroke-width="2"/></svg>
<div class="a" style="left:1337px;top:276px;width:14px;height:13px;border:1px solid #5a5a5a;border-top-color:#4e4e4e;border-left-color:#4e4e4e"></div>
<div class="t" style="left:1410px;top:279px;font-size:10px;color:#e6e6e6">Ocultar capa actual</div>
<div class="a" style="left:1405px;top:313px;width:169px;height:1px;background:#4b4b4b"></div>
<svg class="a" style="left:1318px;top:298px" width="10" height="10"><path d="M1,5 L4,8 L9,1.5" fill="none" stroke="#ececec" stroke-width="2"/></svg>
<div class="a" style="left:1337px;top:296px;width:14px;height:13px;border:1px solid #5a5a5a;border-top-color:#4e4e4e;border-left-color:#4e4e4e"></div>
<svg class="a" style="left:1393px;top:298px" width="5" height="10"><path d="M0.5,0.5 L4,5 L0.5,9.5" fill="none" stroke="#c8c8c8" stroke-width="1"/></svg>
<div class="t" style="left:1410px;top:299px;font-size:10px;color:#e6e6e6">Selección capa “Background”</div>
<div class="a" style="left:1405px;top:333px;width:169px;height:1px;background:#4b4b4b"></div>
<svg class="a" style="left:1318px;top:318px" width="10" height="10"><path d="M1,5 L4,8 L9,1.5" fill="none" stroke="#ececec" stroke-width="2"/></svg>
<div class="a" style="left:1337px;top:316px;width:14px;height:13px;border:1px solid #5a5a5a;border-top-color:#4e4e4e;border-left-color:#4e4e4e"></div>
<div class="t" style="left:1410px;top:319px;font-size:10px;color:#e6e6e6">Capa vía copiar</div>
<div class="a" style="left:1405px;top:353px;width:169px;height:1px;background:#4b4b4b"></div>
<svg class="a" style="left:1318px;top:338px" width="10" height="10"><path d="M1,5 L4,8 L9,1.5" fill="none" stroke="#ececec" stroke-width="2"/></svg>
<div class="a" style="left:1337px;top:336px;width:14px;height:13px;border:1px solid #5a5a5a;border-top-color:#4e4e4e;border-left-color:#4e4e4e"></div>
<svg class="a" style="left:1393px;top:338px" width="5" height="10"><path d="M0.5,0.5 L4,5 L0.5,9.5" fill="none" stroke="#c8c8c8" stroke-width="1"/></svg>
<div class="t" style="left:1410px;top:339px;font-size:10px;color:#e6e6e6">Crear capa</div>
<div class="a" style="left:1310px;top:352px;width:280px;height:1px;background:#444"></div>
<div class="a" style="left:1310px;top:353px;width:280px;height:22px;background:#535353"></div>
<div class="a" style="left:1453px;top:353px;width:27px;height:22px;background:#464646"></div>
<div class="a" style="left:1405px;top:361px;width:7px;height:7px;background:#dedede"></div>
<div class="a" style="left:1434px;top:360px;width:8px;height:8px;border-radius:50%;background:#9a9a9a"></div>
<svg class="a" style="left:1462px;top:358px" width="12" height="12"><path d="M1,0.5 L11,6 L1,11.5 Z" fill="#e0e0e0"/></svg>
<svg class="a" style="left:1489px;top:358px" width="14" height="12"><path d="M0.5,2 V1 H5 L5.5,2 Z" fill="#d6d6d6"/><rect x="0.5" y="3" width="13" height="8.5" fill="#d6d6d6"/></svg>
<svg class="a" style="left:1522px;top:357px" width="13" height="13"><rect x="0.5" y="0.5" width="11" height="11" fill="none" stroke="#e0e0e0" stroke-width="1"/><path d="M6,3 V9 M3,6 H9" stroke="#e0e0e0" stroke-width="1.2"/></svg>
<svg class="a" style="left:1550px;top:356px" width="12" height="14"><path d="M0.5,2.5 H11.5 M4,2.5 V0.8 H8 V2.5" fill="none" stroke="#8e8e8e"/><path d="M1.5,3.5 L2.5,13 H9.5 L10.5,3.5 Z M4.5,5 V11.5 M6,5 V11.5 M7.5,5 V11.5" fill="none" stroke="#8e8e8e"/></svg>
<div class="a" style="left:1310px;top:375px;width:280px;height:1px;background:#444"></div>
<div class="a" style="left:1310px;top:376px;width:280px;height:7px;background:#4d4d4d"></div>
<svg class="a" style="left:1432px;top:377px" width="20" height="5"><path d="M1,0v5M3,0v5M5,0v5M7,0v5M9,0v5M11,0v5M13,0v5M15,0v5M17,0v5" stroke="#3c3c3c" stroke-width="0.8"/></svg>
<!-- red arrows -->
<svg class="a" style="left:0;top:0" width="1915" height="1037" viewBox="0 0 1915 1037">
<path fill-rule="evenodd" fill="#e41e26" d="M1499.1,753 H1561.6 V746 L1628.5,762.1 L1561.6,778.6 V771.7 H1499.1 Z M1503.9,758.2 H1566.4 V752.2 L1610.7,762.1 L1566.4,773 V766.5 H1503.9 Z"/>
<path fill-rule="evenodd" fill="#e41e26" d="M1498.2,797.7 H1561.6 V792.5 L1628.5,806.8 L1561.6,822 V816 H1498.2 Z M1503,803 H1566.4 V798 L1610,806.8 L1566.4,816.8 V810.7 H1503 Z"/>
<path fill-rule="evenodd" fill="#e41e26" d="M1336.1,234.5 H1363.4 V229.9 L1394.3,242 L1363.4,254.2 V249.2 H1336.1 Z M1341.7,240 H1367.6 V236.7 L1383.5,242 L1367.6,247.7 V244.1 H1341.7 Z"/>
<path fill-rule="evenodd" fill="#e41e26" d="M1336,297.5 H1361.8 V293.8 L1391.8,303.8 L1361.8,313.8 V309.7 H1336 Z M1341,303.2 H1366 V300.5 L1376,303.8 L1366,307 V304.4 H1341 Z"/>
</svg>
</body></html>
